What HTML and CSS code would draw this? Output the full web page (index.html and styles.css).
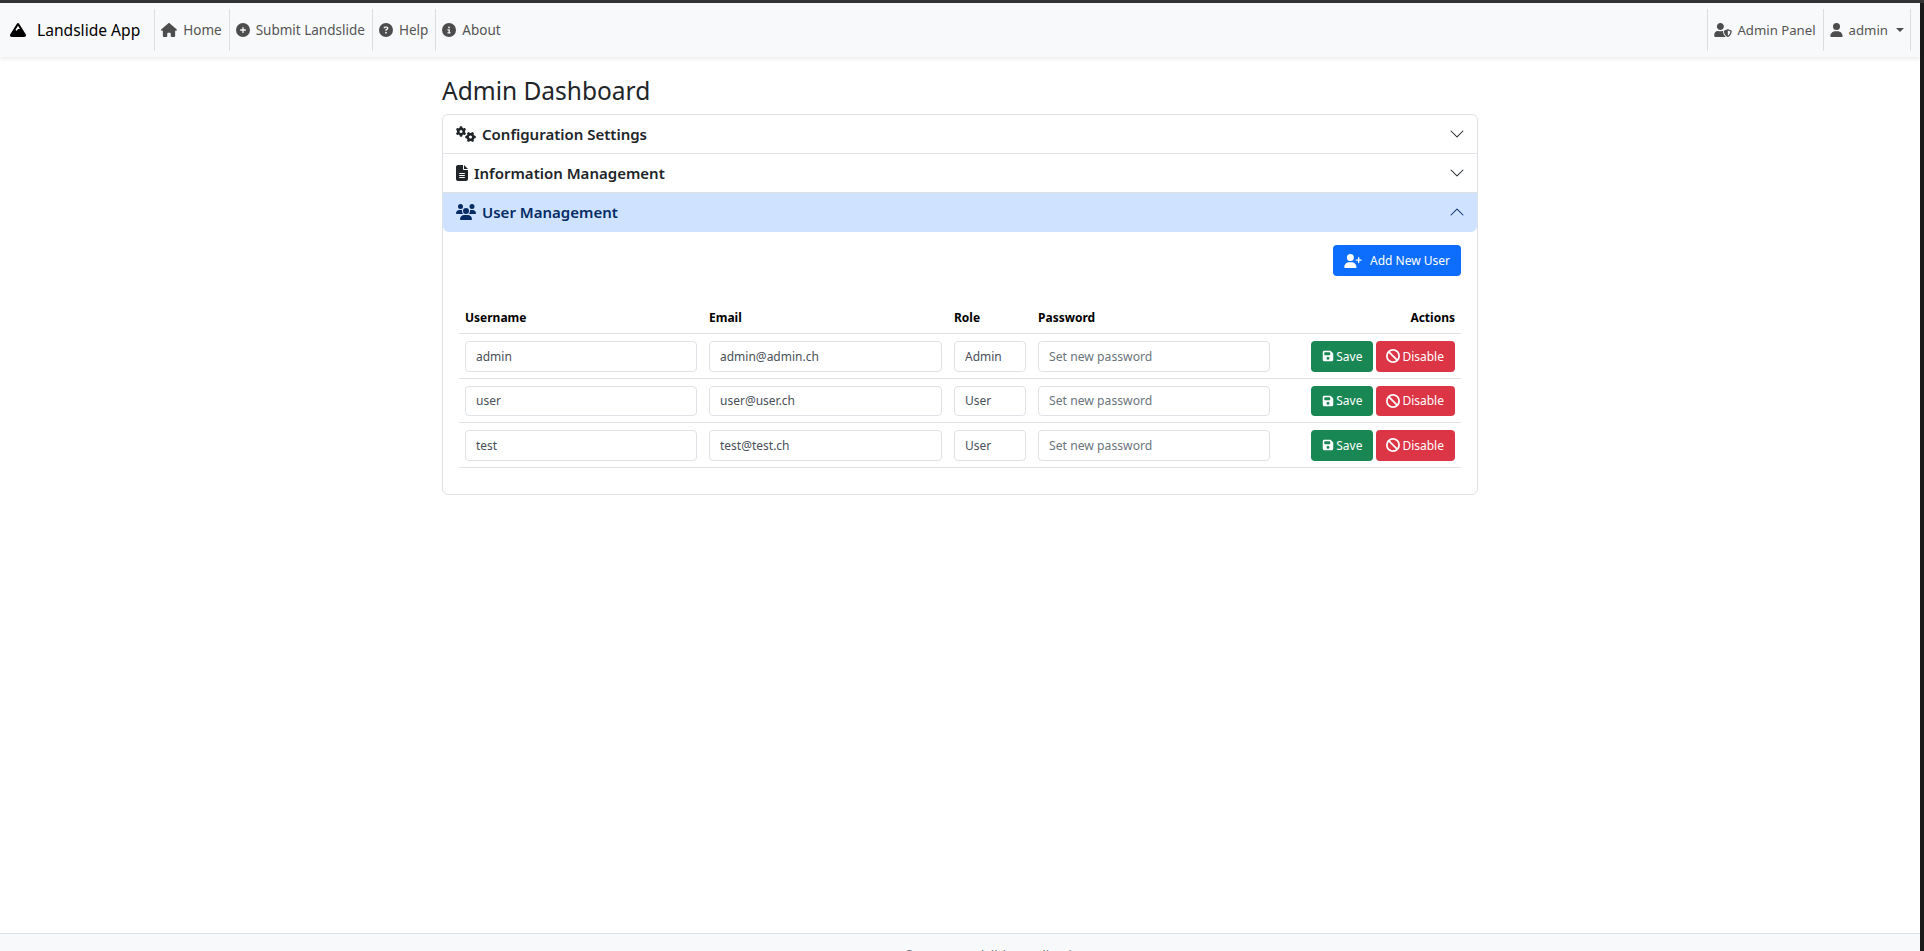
FILE: index.html
```html
<!DOCTYPE html>
<html lang="en">
<head>
  <meta charset="UTF-8">
  <title>Admin Dashboard</title>
  <link rel="stylesheet" href="styles.css">
</head>
<body>
  <svg class="sprite" xmlns="http://www.w3.org/2000/svg">
    <symbol id="i-mountain" viewBox="0 0 512 512"><path d="M256 32c12.5 0 24.1 6.4 30.8 17L503.4 394.4c5.6 8.9 8.6 19.2 8.6 29.7c0 30.9-25 55.9-55.9 55.9H55.9C25 480 0 455 0 424.1c0-10.5 3-20.8 8.6-29.7L225.2 49c6.6-10.6 18.3-17 30.8-17zm65 192L256 120.4 176.9 246.5l18.3 24.4c6.4 8.5 19.2 8.5 25.6 0l25.6-34.1c6-8.1 15.5-12.8 25.6-12.8h49z"/></symbol>
    <symbol id="i-home" viewBox="0 0 576 512"><path d="M575.8 255.5c0 18-15 32.1-32 32.1h-32l.7 160.2c0 2.7-.2 5.4-.5 8.1V472c0 22.1-17.9 40-40 40H456c-1.1 0-2.2 0-3.3-.1c-1.4 .1-2.8 .1-4.2 .1H416 392c-22.1 0-40-17.9-40-40V448 384c0-17.7-14.3-32-32-32H256c-17.7 0-32 14.3-32 32v64 24c0 22.1-17.9 40-40 40H160 128.1c-1.5 0-3-.1-4.5-.2c-1.2 .1-2.4 .2-3.6 .2H104c-22.1 0-40-17.9-40-40V360c0-.9 0-1.9 .1-2.8V287.6H32c-18 0-32-14-32-32.1c0-9 3-17 10-24L266.4 8c7-7 15-8 22-8s15 2 21 7L564.8 231.5c8 7 12 15 11 24z"/></symbol>
    <symbol id="i-plus" viewBox="0 0 512 512"><path d="M256 512A256 256 0 1 0 256 0a256 256 0 1 0 0 512zM232 344V280H168c-13.3 0-24-10.7-24-24s10.7-24 24-24h64V168c0-13.3 10.7-24 24-24s24 10.7 24 24v64h64c13.3 0 24 10.7 24 24s-10.7 24-24 24H280v64c0 13.3-10.7 24-24 24s-24-10.7-24-24z"/></symbol>
    <symbol id="i-help" viewBox="0 0 512 512"><path d="M256 512A256 256 0 1 0 256 0a256 256 0 1 0 0 512zM169.8 165.3c7.9-22.3 29.1-37.3 52.8-37.3h58.3c34.9 0 63.1 28.3 63.1 63.1c0 22.6-12.1 43.5-31.7 54.8L280 264.4c-.2 13-10.9 23.6-24 23.6c-13.3 0-24-10.7-24-24V250.5c0-8.6 4.6-16.5 12.1-20.8l44.3-25.4c4.7-2.7 7.6-7.7 7.6-13.1c0-8.4-6.8-15.1-15.1-15.1H222.6c-3.4 0-6.4 2.1-7.5 5.3l-.4 1.2c-4.4 12.5-18.2 19-30.6 14.6s-19-18.2-14.6-30.6l.4-1.2zM224 352a32 32 0 1 1 64 0 32 32 0 1 1 -64 0z"/></symbol>
    <symbol id="i-info" viewBox="0 0 512 512"><path d="M256 512A256 256 0 1 0 256 0a256 256 0 1 0 0 512zM216 336h24V272H216c-13.3 0-24-10.7-24-24s10.7-24 24-24h48c13.3 0 24 10.7 24 24v88h8c13.3 0 24 10.7 24 24s-10.7 24-24 24H216c-13.3 0-24-10.7-24-24s10.7-24 24-24zm40-208a32 32 0 1 1 0 64 32 32 0 1 1 0-64z"/></symbol>
    <symbol id="i-user" viewBox="0 0 448 512"><path d="M224 256A128 128 0 1 0 224 0a128 128 0 1 0 0 256zm-45.7 48C79.8 304 0 383.8 0 482.3C0 498.7 13.3 512 29.7 512H418.3c16.4 0 29.7-13.3 29.7-29.7C448 383.8 368.2 304 269.7 304H178.3z"/></symbol>
    <symbol id="i-shield" viewBox="0 0 640 512"><path d="M622.3 271.1l-115.2-45c-4.1-1.6-12.6-3.7-22.2 0l-115.2 45c-10.7 4.2-17.7 14-17.7 24.9 0 111.6 68.7 188.8 132.9 213.9 9.6 3.7 18 1.6 22.2 0C558.4 489.9 640 420.5 640 296c0-10.9-7-20.7-17.7-24.9zM496 462.4V273.3l95.5 37.3c-5.6 87.1-60.9 135.4-95.5 151.8zM224 256c70.7 0 128-57.3 128-128S294.7 0 224 0 96 57.3 96 128s57.3 128 128 128zm96 40c0-2.5.8-4.8 1.1-7.2-2.5-.1-4.9-.8-7.5-.8h-16.7c-22.2 10.2-46.9 16-72.9 16s-50.6-5.8-72.9-16h-16.7C60.2 288 0 348.2 0 422.4V464c0 26.5 21.5 48 48 48h352c6.8 0 13.3-1.5 19.2-4-54-42.9-99.2-116.7-99.2-212z"/></symbol>
    <symbol id="i-user-plus" viewBox="0 0 640 512"><path d="M96 128a128 128 0 1 1 256 0A128 128 0 1 1 96 128zM0 482.3C0 383.8 79.8 304 178.3 304h91.4C368.2 304 448 383.8 448 482.3c0 16.4-13.3 29.7-29.7 29.7H29.7C13.3 512 0 498.7 0 482.3zM504 312V248H440c-13.3 0-24-10.7-24-24s10.7-24 24-24h64V136c0-13.3 10.7-24 24-24s24 10.7 24 24v64h64c13.3 0 24 10.7 24 24s-10.7 24-24 24H552v64c0 13.3-10.7 24-24 24s-24-10.7-24-24z"/></symbol>
    <symbol id="i-users" viewBox="0 0 640 512"><path d="M144 0a80 80 0 1 1 0 160A80 80 0 1 1 144 0zM512 0a80 80 0 1 1 0 160A80 80 0 1 1 512 0zM0 298.7C0 239.8 47.8 192 106.7 192h42.7c15.9 0 31 3.5 44.6 9.7c-1.3 7.2-1.9 14.7-1.9 22.3c0 38.2 16.8 72.5 43.3 96c-.2 0-.4 0-.7 0H21.3C9.6 320 0 310.4 0 298.7zM405.3 320c-.2 0-.4 0-.7 0c26.6-23.5 43.3-57.8 43.3-96c0-7.6-.7-15-1.9-22.3c13.6-6.3 28.7-9.7 44.6-9.7h42.7C592.2 192 640 239.8 640 298.7c0 11.8-9.6 21.3-21.3 21.3H405.3zM224 224a96 96 0 1 1 192 0 96 96 0 1 1 -192 0zM128 485.3C128 411.7 187.7 352 261.3 352H378.7C452.3 352 512 411.7 512 485.3c0 14.7-11.9 26.7-26.7 26.7H154.7c-14.7 0-26.7-11.9-26.7-26.7z"/></symbol>
    <symbol id="i-file" viewBox="0 0 384 512"><path d="M64 0C28.7 0 0 28.7 0 64V448c0 35.3 28.7 64 64 64H320c35.3 0 64-28.7 64-64V160H256c-17.7 0-32-14.3-32-32V0H64zM256 0V128H384L256 0zM112 256H272c8.8 0 16 7.2 16 16s-7.2 16-16 16H112c-8.8 0-16-7.2-16-16s7.2-16 16-16zm0 64H272c8.8 0 16 7.2 16 16s-7.2 16-16 16H112c-8.8 0-16-7.2-16-16s7.2-16 16-16zm0 64H272c8.8 0 16 7.2 16 16s-7.2 16-16 16H112c-8.8 0-16-7.2-16-16s7.2-16 16-16z"/></symbol>
    <symbol id="i-save" viewBox="0 0 448 512"><path d="M64 32C28.7 32 0 60.7 0 96V416c0 35.3 28.7 64 64 64H384c35.3 0 64-28.7 64-64V173.3c0-17-6.7-33.3-18.7-45.3L352 50.7C340 38.7 323.7 32 306.7 32H64zm0 96c0-17.7 14.3-32 32-32H288c17.7 0 32 14.3 32 32v64c0 17.7-14.3 32-32 32H96c-17.7 0-32-14.3-32-32V128zM224 288a64 64 0 1 1 0 128 64 64 0 1 1 0-128z"/></symbol>
    <symbol id="i-ban" viewBox="0 0 512 512"><path d="M367.2 412.5L99.5 144.8C77.1 176.1 64 214.5 64 256c0 106 86 192 192 192c41.5 0 79.9-13.1 111.2-35.5zm45.3-45.3C434.9 335.9 448 297.5 448 256c0-106-86-192-192-192c-41.5 0-79.9 13.1-111.2 35.5L412.5 367.2zM0 256a256 256 0 1 1 512 0A256 256 0 1 1 0 256z"/></symbol>
    <symbol id="i-cogs" viewBox="0 0 640 512"><path d="M308.5 135.3c7.1-6.3 9.9-16.2 6.2-25c-2.3-5.3-4.8-10.5-7.6-15.5L304 89.4c-3-5-6.3-9.9-9.8-14.6c-5.7-7.6-15.7-10.1-24.7-7.1l-28.2 9.3c-10.7-8.8-23-16-36.2-20.9L199 27.1c-1.9-9.3-9.1-16.7-18.5-17.8C173.9 8.4 167.2 8 160.4 8h-.7c-6.8 0-13.5 .4-20.1 1.2c-9.4 1.1-16.6 8.6-18.5 17.8L115 56.1c-13.3 5-25.5 12.1-36.2 20.9L50.5 67.8c-9-3-19-.5-24.7 7.1c-3.5 4.7-6.8 9.6-9.9 14.6l-3 5.3c-2.8 5-5.3 10.2-7.6 15.6c-3.7 8.7-.9 18.6 6.2 25l22.2 19.8C32.6 161.9 32 168.9 32 176s.6 14.1 1.7 20.9L11.5 216.7c-7.1 6.3-9.9 16.2-6.2 25c2.3 5.3 4.8 10.5 7.6 15.6l3 5.2c3 5.1 6.3 9.9 9.9 14.6c5.7 7.6 15.7 10.1 24.7 7.1l28.2-9.3c10.7 8.8 23 16 36.2 20.9l6.1 29.1c1.9 9.3 9.1 16.7 18.5 17.8c6.7 .8 13.5 1.2 20.4 1.2s13.7-.4 20.4-1.2c9.4-1.1 16.6-8.6 18.5-17.8l6.1-29.1c13.3-5 25.5-12.1 36.2-20.9l28.2 9.3c9 3 19 .5 24.7-7.1c3.5-4.7 6.8-9.5 9.8-14.6l3.1-5.4c2.8-5 5.3-10.2 7.6-15.5c3.7-8.7 .9-18.6-6.2-25l-22.2-19.8c1.1-6.8 1.7-13.8 1.7-20.9s-.6-14.1-1.7-20.9l22.2-19.8zM112 176a48 48 0 1 1 96 0 48 48 0 1 1 -96 0zM504.7 500.5c6.3 7.1 16.2 9.9 25 6.2c5.3-2.3 10.5-4.8 15.5-7.6l5.4-3.1c5-3 9.9-6.3 14.6-9.8c7.6-5.7 10.1-15.7 7.1-24.7l-9.3-28.2c8.8-10.7 16-23 20.9-36.2l29.1-6.1c9.3-1.9 16.7-9.1 17.8-18.5c.8-6.7 1.2-13.5 1.2-20.4s-.4-13.7-1.2-20.4c-1.1-9.4-8.6-16.6-17.8-18.5L583.9 307c-5-13.3-12.1-25.5-20.9-36.2l9.3-28.2c3-9 .5-19-7.1-24.7c-4.7-3.5-9.6-6.8-14.6-9.9l-5.3-3c-5-2.8-10.2-5.3-15.6-7.6c-8.7-3.7-18.6-.9-25 6.2l-19.8 22.2c-6.8-1.1-13.8-1.7-20.9-1.7s-14.1 .6-20.9 1.7l-19.8-22.2c-6.3-7.1-16.2-9.9-25-6.2c-5.3 2.3-10.5 4.8-15.6 7.6l-5.2 3c-5.1 3-9.9 6.3-14.6 9.9c-7.6 5.7-10.1 15.7-7.1 24.7l9.3 28.2c-8.8 10.7-16 23-20.9 36.2L315.1 313c-9.3 1.9-16.7 9.1-17.8 18.5c-.8 6.7-1.2 13.5-1.2 20.4s.4 13.7 1.2 20.4c1.1 9.4 8.6 16.6 17.8 18.5l29.1 6.1c5 13.3 12.1 25.5 20.9 36.2l-9.3 28.2c-3 9-.5 19 7.1 24.7c4.7 3.5 9.5 6.8 14.6 9.8l5.4 3.1c5 2.8 10.2 5.3 15.5 7.6c8.7 3.7 18.6 .9 25-6.2l19.8-22.2c6.8 1.1 13.8 1.7 20.9 1.7s14.1-.6 20.9-1.7l19.8 22.2zM464 304a48 48 0 1 1 0 96 48 48 0 1 1 0-96z"/></symbol>
    <symbol id="i-chevron" viewBox="0 0 16 16"><path fill-rule="evenodd" d="M1.646 4.646a.5.5 0 0 1 .708 0L8 10.293l5.646-5.647a.5.5 0 0 1 .708.708l-6 6a.5.5 0 0 1-.708 0l-6-6a.5.5 0 0 1 0-.708z"/></symbol>
  </svg>

  <div class="window">
    <nav class="navbar">
      <a class="brand" href="#"><svg class="brand-ico"><use href="#i-mountain"/></svg>Landslide App</a>
      <a class="nav-link" href="#"><svg class="ico ico-home"><use href="#i-home"/></svg>Home</a>
      <a class="nav-link" href="#"><svg class="ico"><use href="#i-plus"/></svg>Submit Landslide</a>
      <a class="nav-link" href="#"><svg class="ico"><use href="#i-help"/></svg>Help</a>
      <a class="nav-link" href="#"><svg class="ico"><use href="#i-info"/></svg>About</a>
      <span class="nav-space"></span>
      <a class="nav-link nav-right" href="#"><svg class="ico ico-shield"><use href="#i-shield"/></svg>Admin Panel</a>
      <a class="nav-link nav-right nav-user" href="#"><svg class="ico ico-user"><use href="#i-user"/></svg>admin<span class="caret"></span></a>
    </nav>

    <main class="content">
      <h1 class="title">Admin Dashboard</h1>

      <div class="accordion">
        <div class="acc-head">
          <svg class="acc-ico acc-ico-wide"><use href="#i-cogs"/></svg>Configuration Settings
          <svg class="chevron"><use href="#i-chevron"/></svg>
        </div>
        <div class="acc-head">
          <svg class="acc-ico acc-ico-file"><use href="#i-file"/></svg>Information Management
          <svg class="chevron"><use href="#i-chevron"/></svg>
        </div>
        <div class="acc-head acc-open">
          <svg class="acc-ico acc-ico-wide"><use href="#i-users"/></svg>User Management
          <svg class="chevron chevron-up"><use href="#i-chevron"/></svg>
        </div>

        <div class="acc-body">
          <div class="toolbar">
            <button class="btn btn-primary btn-add"><svg class="btn-ico-add"><use href="#i-user-plus"/></svg>Add New User</button>
          </div>

          <table class="users">
            <thead>
              <tr>
                <th class="col-name">Username</th>
                <th class="col-email">Email</th>
                <th class="col-role">Role</th>
                <th class="col-pass">Password</th>
                <th class="col-actions">Actions</th>
              </tr>
            </thead>
            <tbody>
              <tr>
                <td><input class="field" value="admin"></td>
                <td><input class="field" value="admin@admin.ch"></td>
                <td><input class="field" value="Admin"></td>
                <td><input class="field" placeholder="Set new password"></td>
                <td class="actions">
                  <button class="btn btn-save"><svg class="btn-ico"><use href="#i-save"/></svg>Save</button>
                  <button class="btn btn-disable"><svg class="btn-ico btn-ico-ban"><use href="#i-ban"/></svg>Disable</button>
                </td>
              </tr>
              <tr>
                <td><input class="field" value="user"></td>
                <td><input class="field" value="user@user.ch"></td>
                <td><input class="field" value="User"></td>
                <td><input class="field" placeholder="Set new password"></td>
                <td class="actions">
                  <button class="btn btn-save"><svg class="btn-ico"><use href="#i-save"/></svg>Save</button>
                  <button class="btn btn-disable"><svg class="btn-ico btn-ico-ban"><use href="#i-ban"/></svg>Disable</button>
                </td>
              </tr>
              <tr>
                <td><input class="field" value="test"></td>
                <td><input class="field" value="test@test.ch"></td>
                <td><input class="field" value="User"></td>
                <td><input class="field" placeholder="Set new password"></td>
                <td class="actions">
                  <button class="btn btn-save"><svg class="btn-ico"><use href="#i-save"/></svg>Save</button>
                  <button class="btn btn-disable"><svg class="btn-ico btn-ico-ban"><use href="#i-ban"/></svg>Disable</button>
                </td>
              </tr>
            </tbody>
          </table>
        </div>
      </div>
    </main>

    <footer class="footer"><span>© 2025 Landslide Application</span></footer>
  </div>
</body>
</html>
```

FILE: styles.css
```css
* {
  box-sizing: border-box;
}
html, body {
  height: 951px;
  margin: 0;
  overflow: hidden;
}
body {
  background-color: #1a1a1a;
  border-top: 3px solid #333;
  font-family: "Noto Sans", "Open Sans", sans-serif;
  font-size: 14px;
  color: #212529;
  padding-right: 4px;
}
a {
  text-decoration: none;
}
.sprite {
  display: none;
}
.window {
  height: 948px;
  background-color: #fff;
  display: grid;
  grid-template-rows: 54px 1fr 18px;
}

/* navbar */
.navbar {
  display: flex;
  align-items: stretch;
  background-color: #f8f9fa;
  padding: 6px 9px 6px 0;
  box-shadow: 0 2px 4px rgba(0, 0, 0, .08);
}
.brand {
  display: flex;
  align-items: center;
  color: #000;
  font-size: 15.6px;
  padding: 0 14px 0 10px;
}
.brand-ico {
  width: 16px;
  height: 16px;
  fill: #000;
  margin-right: 11px;
}
.nav-link {
  display: flex;
  align-items: center;
  color: #555;
  font-size: 13.5px;
  padding: 0 7px 0 6px;
  border-left: 1px solid #dcdee0;
}
.nav-right {
  font-size: 13.2px;
}
.nav-user {
  border-right: 1px solid #dcdee0;
  padding-right: 6px;
}
.nav-space {
  flex: 1;
}
.ico {
  width: 14px;
  height: 14px;
  fill: #4d4d4d;
  margin-right: 6px;
}
.ico-home {
  width: 16px;
}
.ico-shield {
  width: 18px;
  margin-right: 5px;
}
.ico-user {
  width: 13px;
}
.caret {
  margin-left: 8px;
  border-top: 4px solid #4d4d4d;
  border-left: 4px solid transparent;
  border-right: 4px solid transparent;
}

/* main area */
.content {
  width: 1036px;
  margin-left: 442px;
}
.title {
  font-size: 24.5px;
  font-weight: 400;
  line-height: 29px;
  margin: 19px 0 9px;
}
.accordion {
  border: 1px solid #dee2e6;
  border-radius: 6px;
}
.acc-head {
  display: flex;
  align-items: center;
  height: 39px;
  padding: 0 12px 1px 13px;
  font-size: 15px;
  font-weight: 600;
  border-bottom: 1px solid #dee2e6;
  color: #212529;
}
.acc-open {
  background-color: #cfe2ff;
  color: #052c65;
  border-bottom: 0;
  border-radius: 0 0 6px 6px;
}
.acc-ico {
  height: 16px;
  width: 16px;
  margin-right: 6px;
  fill: currentColor;
}
.acc-ico-wide {
  width: 20px;
}
.acc-ico-file {
  width: 12px;
}
.chevron {
  margin-left: auto;
  width: 16px;
  height: 16px;
  fill: currentColor;
}
.chevron-up {
  transform: rotate(180deg);
}
.acc-body {
  padding: 13px 16px 26px;
}
.toolbar {
  display: flex;
  justify-content: flex-end;
  margin-bottom: 24px;
}

/* buttons */
.btn {
  display: inline-flex;
  align-items: center;
  border: 0;
  border-radius: 4px;
  color: #fff;
  font-family: inherit;
  font-size: 12px;
  padding: 0 11px;
  height: 30.5px;
  vertical-align: top;
}
.btn-primary {
  background-color: #0d6efd;
}
.btn-add {
  height: 31px;
  padding: 0 11px;
}
.btn-ico-add {
  width: 18px;
  height: 14px;
  fill: #fff;
  margin-right: 8px;
}
.btn-save {
  background-color: #198754;
}
.btn-disable {
  background-color: #dc3545;
  padding-left: 10px;
}
.btn-ico {
  width: 12px;
  height: 12px;
  fill: #fff;
  margin-right: 2px;
}
.btn-ico-ban {
  width: 14px;
  height: 14px;
}

/* table */
.users {
  width: 100%;
  border-collapse: collapse;
  table-layout: fixed;
}
.users th {
  font-size: 12px;
  line-height: 17px;
  font-weight: 700;
  text-align: left;
  padding: 9px 6px 7px;
  color: #000;
  border-bottom: 1px solid #dee2e6;
}
.users td {
  padding: 7px 6px 6px;
  border-bottom: 1px solid #dee2e6;
}
.col-name, .col-pass {
  width: 244px;
}
.col-email {
  width: 245px;
}
.col-role {
  width: 84px;
}
.users .col-actions {
  text-align: right;
}
.field {
  display: block;
  width: 100%;
  height: 30.5px;
  border: 1px solid #dee2e6;
  border-radius: 4px;
  padding: 0 10px;
  font-family: inherit;
  font-size: 12px;
  color: #495057;
  background-color: #fff;
}
.field::placeholder {
  color: #6c757d;
  font-size: 12.2px;
}
.actions {
  text-align: right;
  white-space: nowrap;
  font-size: 0;
}
.actions .btn + .btn {
  margin-left: 3px;
}

/* footer */
.footer {
  background-color: #f8f9fa;
  border-top: 1px solid #dee2e6;
  overflow: hidden;
  text-align: center;
  padding: 13px 0 0 72px;
  font-size: 13.5px;
  color: #6c757d;
}
```
